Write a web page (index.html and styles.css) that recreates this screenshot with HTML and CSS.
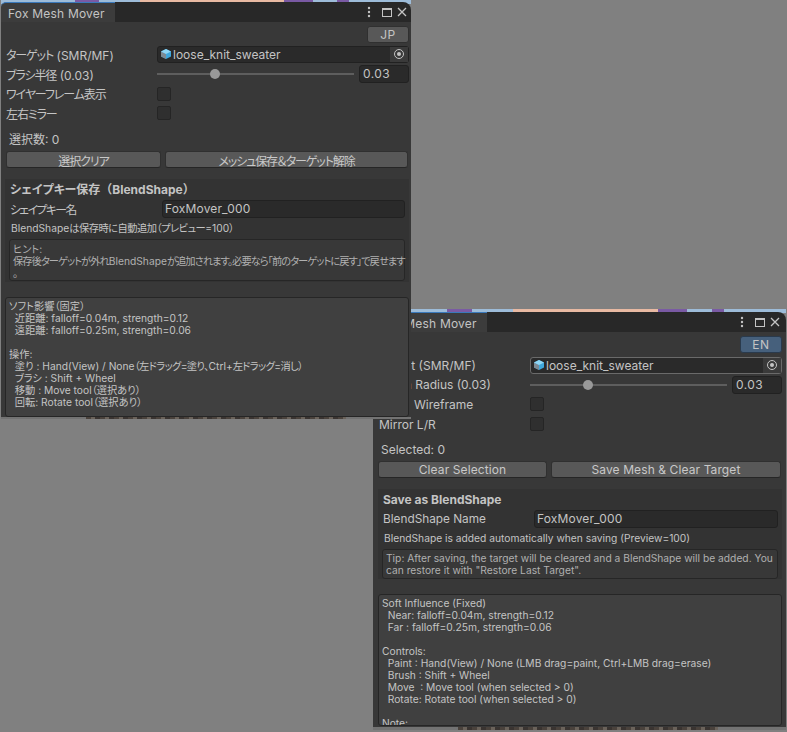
FILE: index.html
```html
<!DOCTYPE html>
<html>

<head>
    <meta charset="UTF-8">
    <link rel="stylesheet" href="styles.css">
</head>

<body>
    <!-- EN window, sits behind the JP one -->
    <div class="window window-en">
        <div class="scene-top"></div>
        <div class="tabbar">
            <div class="tab">Fox Mesh Mover</div>
            <div class="tab-icons">
                <svg width="42" height="14" viewBox="0 0 42 14">
                    <circle cx="2" cy="3" r="1.2" fill="#c4c4c4" />
                    <circle cx="2" cy="7" r="1.2" fill="#c4c4c4" />
                    <circle cx="2" cy="11" r="1.2" fill="#c4c4c4" />
                    <rect x="15.5" y="3.5" width="9" height="8" fill="none" stroke="#c4c4c4" />
                    <rect x="15" y="3" width="10" height="2" fill="#c4c4c4" />
                    <path d="M31 3l8 8M39 3l-8 8" stroke="#c4c4c4" stroke-width="1.3" fill="none" />
                </svg>
            </div>
        </div>
        <div class="content">
            <div class="lang-row"><button class="lang lang-on">EN</button></div>
            <div class="row">
                <span class="label">Target (SMR/MF)</span>
                <div class="object-field focused">
                    <svg class="cube" width="12" height="12" viewBox="0 0 12 12">
                        <path d="M6 1l5 2.5v5L6 11 1 8.5v-5z" fill="#3fa7dc" />
                        <path d="M1 3.5L6 6v5L1 8.5z" fill="#7d8a94" />
                        <path d="M6 1l5 2.5L6 6 1 3.5z" fill="#8fd6f5" />
                    </svg>
                    <span>loose_knit_sweater</span>
                    <div class="picker"><i></i></div>
                </div>
            </div>
            <div class="row">
                <span class="label">Brush Radius (0.03)</span>
                <div class="slider">
                    <div class="track"><div class="thumb"></div></div>
                    <div class="num">0.03</div>
                </div>
            </div>
            <div class="row">
                <span class="label">Show Wireframe</span>
                <div class="check"></div>
            </div>
            <div class="row">
                <span class="label">Mirror L/R</span>
                <div class="check"></div>
            </div>
            <div class="selected">Selected: 0</div>
            <div class="buttons">
                <button class="btn btn-clear">Clear Selection</button>
                <button class="btn btn-save">Save Mesh &amp; Clear Target</button>
            </div>
            <div class="section">
                <div class="section-title">Save as BlendShape</div>
                <div class="name-row">
                    <span class="label">BlendShape Name</span>
                    <div class="text-field">FoxMover_000</div>
                </div>
                <div class="note">BlendShape is added automatically when saving (Preview=100)</div>
                <div class="help">Tip: After saving, the target will be cleared and a BlendShape will be added. You can restore it with "Restore Last Target".</div>
            </div>
            <div class="info">Soft Influence (Fixed)
  Near: falloff=0.04m, strength=0.12
  Far : falloff=0.25m, strength=0.06

Controls:
  Paint : Hand(View) / None (LMB drag=paint, Ctrl+LMB drag=erase)
  Brush : Shift + Wheel
  Move  : Move tool (when selected &gt; 0)
  Rotate: Rotate tool (when selected &gt; 0)

Note:</div>
        </div>
        <div class="scene-bottom"></div>
    </div>

    <!-- JP window -->
    <div class="window window-jp">
        <div class="scene-top"></div>
        <div class="tabbar">
            <div class="tab">Fox Mesh Mover</div>
            <div class="tab-icons">
                <svg width="42" height="14" viewBox="0 0 42 14">
                    <circle cx="2" cy="3" r="1.2" fill="#c4c4c4" />
                    <circle cx="2" cy="7" r="1.2" fill="#c4c4c4" />
                    <circle cx="2" cy="11" r="1.2" fill="#c4c4c4" />
                    <rect x="15.5" y="3.5" width="9" height="8" fill="none" stroke="#c4c4c4" />
                    <rect x="15" y="3" width="10" height="2" fill="#c4c4c4" />
                    <path d="M31 3l8 8M39 3l-8 8" stroke="#c4c4c4" stroke-width="1.3" fill="none" />
                </svg>
            </div>
        </div>
        <div class="content">
            <div class="lang-row"><button class="lang">JP</button></div>
            <div class="row">
                <span class="label"><span class="ja">ターゲット</span> (SMR/MF)</span>
                <div class="object-field">
                    <svg class="cube" width="12" height="12" viewBox="0 0 12 12">
                        <path d="M6 1l5 2.5v5L6 11 1 8.5v-5z" fill="#3fa7dc" />
                        <path d="M1 3.5L6 6v5L1 8.5z" fill="#7d8a94" />
                        <path d="M6 1l5 2.5L6 6 1 3.5z" fill="#8fd6f5" />
                    </svg>
                    <span>loose_knit_sweater</span>
                    <div class="picker"><i></i></div>
                </div>
            </div>
            <div class="row">
                <span class="label"><span class="ja">ブラシ半径</span> (0.03)</span>
                <div class="slider">
                    <div class="track"><div class="thumb"></div></div>
                    <div class="num">0.03</div>
                </div>
            </div>
            <div class="row">
                <span class="label"><span class="ja">ワイヤーフレーム表示</span></span>
                <div class="check"></div>
            </div>
            <div class="row">
                <span class="label"><span class="ja">左右ミラー</span></span>
                <div class="check"></div>
            </div>
            <div class="selected">選択数: 0</div>
            <div class="buttons">
                <button class="btn btn-clear"><span class="ja">選択クリア</span></button>
                <button class="btn btn-save"><span class="ja">メッシュ保存＆ターゲット解除</span></button>
            </div>
            <div class="section">
                <div class="section-title">シェイプキー保存<span class="fw">（</span>BlendShape<span class="fw">）</span></div>
                <div class="name-row">
                    <span class="label"><span class="ja name-ja">シェイプキー名</span></span>
                    <div class="text-field">FoxMover_000</div>
                </div>
                <div class="note">BlendShape<span class="ja-note">は保存時に自動追加（プレビュー</span>=100）</div>
                <div class="help">ヒント:<br><span class="ja-small">保存後ターゲットが外れ</span>BlendShape<span class="ja-small">が追加されます。必要なら「前のターゲットに戻す」で戻せます</span><br>。</div>
            </div>
            <div class="info">ソフト影響（固定）
  近距離: falloff=0.04m, strength=0.12
  遠距離: falloff=0.25m, strength=0.06

操作:
  塗り : Hand(View) / None<span class="ja-paint">（左ドラッグ=塗り、</span>Ctrl+<span class="ja-paint">左ドラッグ=消し）</span>
  ブラシ : Shift + Wheel
  移動 : Move tool（選択あり）
  回転: Rotate tool（選択あり）</div>
        </div>
        <div class="scene-bottom"></div>
    </div>
</body>

</html>
```

FILE: styles.css
```css
* {
    box-sizing: border-box;
}

html,
body {
    margin: 0;
    height: 100%;
    overflow: hidden;
}

body {
    position: relative;
    background: #808080;
    font-family: Inter, "Noto Sans CJK JP", sans-serif;
    font-size: 12px;
    font-feature-settings: "palt";
    color: #c4c4c4;
}

/* the CJK fallback in the reference runs narrower than Noto, even with palt */
.ja {
    letter-spacing: -1.1px;
}

.name-ja {
    letter-spacing: -1.5px;
}

.ja-note {
    letter-spacing: -0.5px;
}

.ja-small {
    letter-spacing: -0.95px;
}

.ja-paint {
    letter-spacing: -0.6px;
}

.fw {
    font-feature-settings: normal;
}

/* windows float on the desktop */
.window {
    position: absolute;
    display: flex;
    flex-direction: column;
    overflow: hidden;
}

.window-jp {
    left: 1px;
    top: 0;
    width: 410px;
    height: 419px;
    z-index: 2;
}

.window-en {
    left: 373px;
    top: 309px;
    width: 413px;
    height: 421px;
    z-index: 1;
}

.scene-top {
    height: 4px;
    flex: none;
    background: linear-gradient(90deg,
            #9dbcd9 0 18%, #7a5aa4 18% 24%, #9dbcd9 24% 34%,
            #e8b9a2 34% 69%, #7a5aa4 69% 76%, #9dbcd9 76% 82%,
            #7a5aa4 82% 85%, #9dbcd9 85% 100%);
}

.scene-bottom {
    height: 2px;
    flex: none;
    background: repeating-linear-gradient(90deg, #4a423c 0 5px, #6a625a 5px 9px, #3a3431 9px 14px) 85px 0 / 260px 100% no-repeat,
        #737373;
}

.window-en .scene-bottom {
    height: 3px;
}

.tabbar {
    display: flex;
    justify-content: space-between;
    height: 20px;
    flex: none;
    background: #282828;
    border-radius: 8px 8px 0 0;
    margin-top: -2px;
}

.window-en .tabbar {
    margin-top: -1px;
}

.tab {
    width: 114px;
    padding: 2px 0 0 7px;
    background: #3c3c3c;
    border-top: 1px solid #3a79bb;
    border-radius: 5px 0 0 0;
    line-height: 17px;
    font-size: 12px;
    letter-spacing: 0.2px;
}

.tab-icons {
    padding: 3px 2px 0 0;
}

.window-en .tab-icons {
    padding-right: 4px;
}

.content {
    flex: 1;
    padding: 4px 2px 0 5px;
    min-height: 0;
    overflow: hidden;
    background: #383838;
}

.window-en .content {
    padding-right: 4px;
}

.lang-row {
    display: flex;
    justify-content: flex-end;
    height: 17px;
    margin-bottom: 1.5px;
}

.window-en .lang-row {
    margin-bottom: 2.2px;
}

.lang {
    width: 42px;
    height: 17px;
    padding: 0;
    border: 1px solid #303030;
    border-radius: 3px;
    background: #585858;
    color: #c4c4c4;
    font: 12px Inter, sans-serif;
    letter-spacing: 0.5px;
}

.lang-on {
    background: #46607c;
    border-color: #2a3a4c;
}

.row {
    display: flex;
    align-items: center;
    height: 19.7px;
}

.label {
    width: 151px;
    flex: none;
    white-space: nowrap;
}

.window-en .label {
    width: 151px;
    margin-left: 1px;
}

.object-field {
    flex: 1;
    display: flex;
    align-items: center;
    height: 17px;
    background: #2a2a2a;
    border: 1px solid #212121;
    border-radius: 3px;
}

.object-field.focused {
    border-color: #6a6a6a;
}

.cube {
    margin: 0 1px 0 2px;
    flex: none;
}

.picker {
    margin-left: auto;
    width: 18px;
    height: 100%;
    background: #3a3a3a;
    display: flex;
    align-items: center;
    justify-content: center;
}

.picker i {
    width: 10px;
    height: 10px;
    border: 1px solid #c4c4c4;
    border-radius: 50%;
    position: relative;
}

.picker i::after {
    content: "";
    position: absolute;
    left: 2px;
    top: 2px;
    width: 4px;
    height: 4px;
    border-radius: 50%;
    background: #c4c4c4;
}

.slider {
    flex: 1;
    display: flex;
    align-items: center;
    gap: 5px;
}

.track {
    flex: 1;
    height: 2px;
    background: #5e5e5e;
    display: flex;
    align-items: center;
}

.thumb {
    width: 10px;
    height: 10px;
    margin-left: 53px;
    border-radius: 50%;
    background: #999;
    flex: none;
}

.num {
    width: 50px;
    height: 18px;
    padding-left: 3px;
    background: #2a2a2a;
    border: 1px solid #212121;
    border-radius: 3px;
    line-height: 16px;
    letter-spacing: 0.4px;
}

.check {
    width: 14px;
    height: 14px;
    background: #2f2f2f;
    border: 1px solid #252525;
    border-radius: 2px;
}

.selected {
    margin-top: 7.2px;
    padding-left: 3px;
    line-height: 19px;
    height: 19.5px;
}

.window-en .selected {
    margin-top: 6.5px;
}

.buttons {
    display: flex;
    gap: 4px;
    height: 17px;
    margin-top: 1px;
    padding-right: 1px;
}

.btn {
    padding: 0;
    border: 1px solid #303030;
    border-bottom-color: #262626;
    border-radius: 3px;
    background: #585858;
    color: #c8c8c8;
    font: 12px Inter, "Noto Sans CJK JP", sans-serif;
    font-feature-settings: "palt";
    letter-spacing: 0.1px;
}

.btn-clear {
    width: 155px;
}

.btn-save {
    flex: 1;
}

.window-en .btn-clear {
    width: 169px;
}

.section {
    margin-top: 11px;
    padding: 3px 4px 1px;
    background: #333;
    height: 103px;
}

.window-jp .section,
.window-jp .info {
    margin-left: -1px;
}

.section-title {
    font-weight: 700;
    line-height: 16px;
    padding-left: 1px;
}

.name-row {
    display: flex;
    align-items: center;
    height: 18px;
    margin-top: 2px;
    padding-left: 1px;
}

.name-row .label {
    width: 152px;
    font-size: 11.8px;
}

.window-en .name-row .label {
    width: 151px;
    margin-left: 0;
}

.text-field {
    flex: 1;
    height: 18px;
    padding-left: 2px;
    background: #2a2a2a;
    border: 1px solid #212121;
    border-radius: 3px;
    line-height: 16px;
    letter-spacing: 0.15px;
}

.note {
    margin-top: 1px;
    padding-left: 2px;
    font-size: 10.25px;
    line-height: 18px;
}

.help {
    margin-top: 2px;
    padding: 3px;
    background: #383838;
    border: 1px solid #262626;
    border-radius: 3px;
    font-size: 10.25px;
    line-height: 12px;
    height: 42px;
    color: #b0b0b0;
    white-space: nowrap;
}

.window-en .help {
    height: 30px;
    padding-top: 2px;
    white-space: normal;
}

.window-en .section {
    height: 90px;
}

.info {
    margin-top: 15px;
    height: 120px;
    padding: 2px 3px;
    background: #404040;
    border: 1px solid #262626;
    border-radius: 3px;
    font-size: 10.25px;
    line-height: 12px;
    white-space: pre-wrap;
    overflow: hidden;
}

.window-en .info {
    height: 132px;
}
```
